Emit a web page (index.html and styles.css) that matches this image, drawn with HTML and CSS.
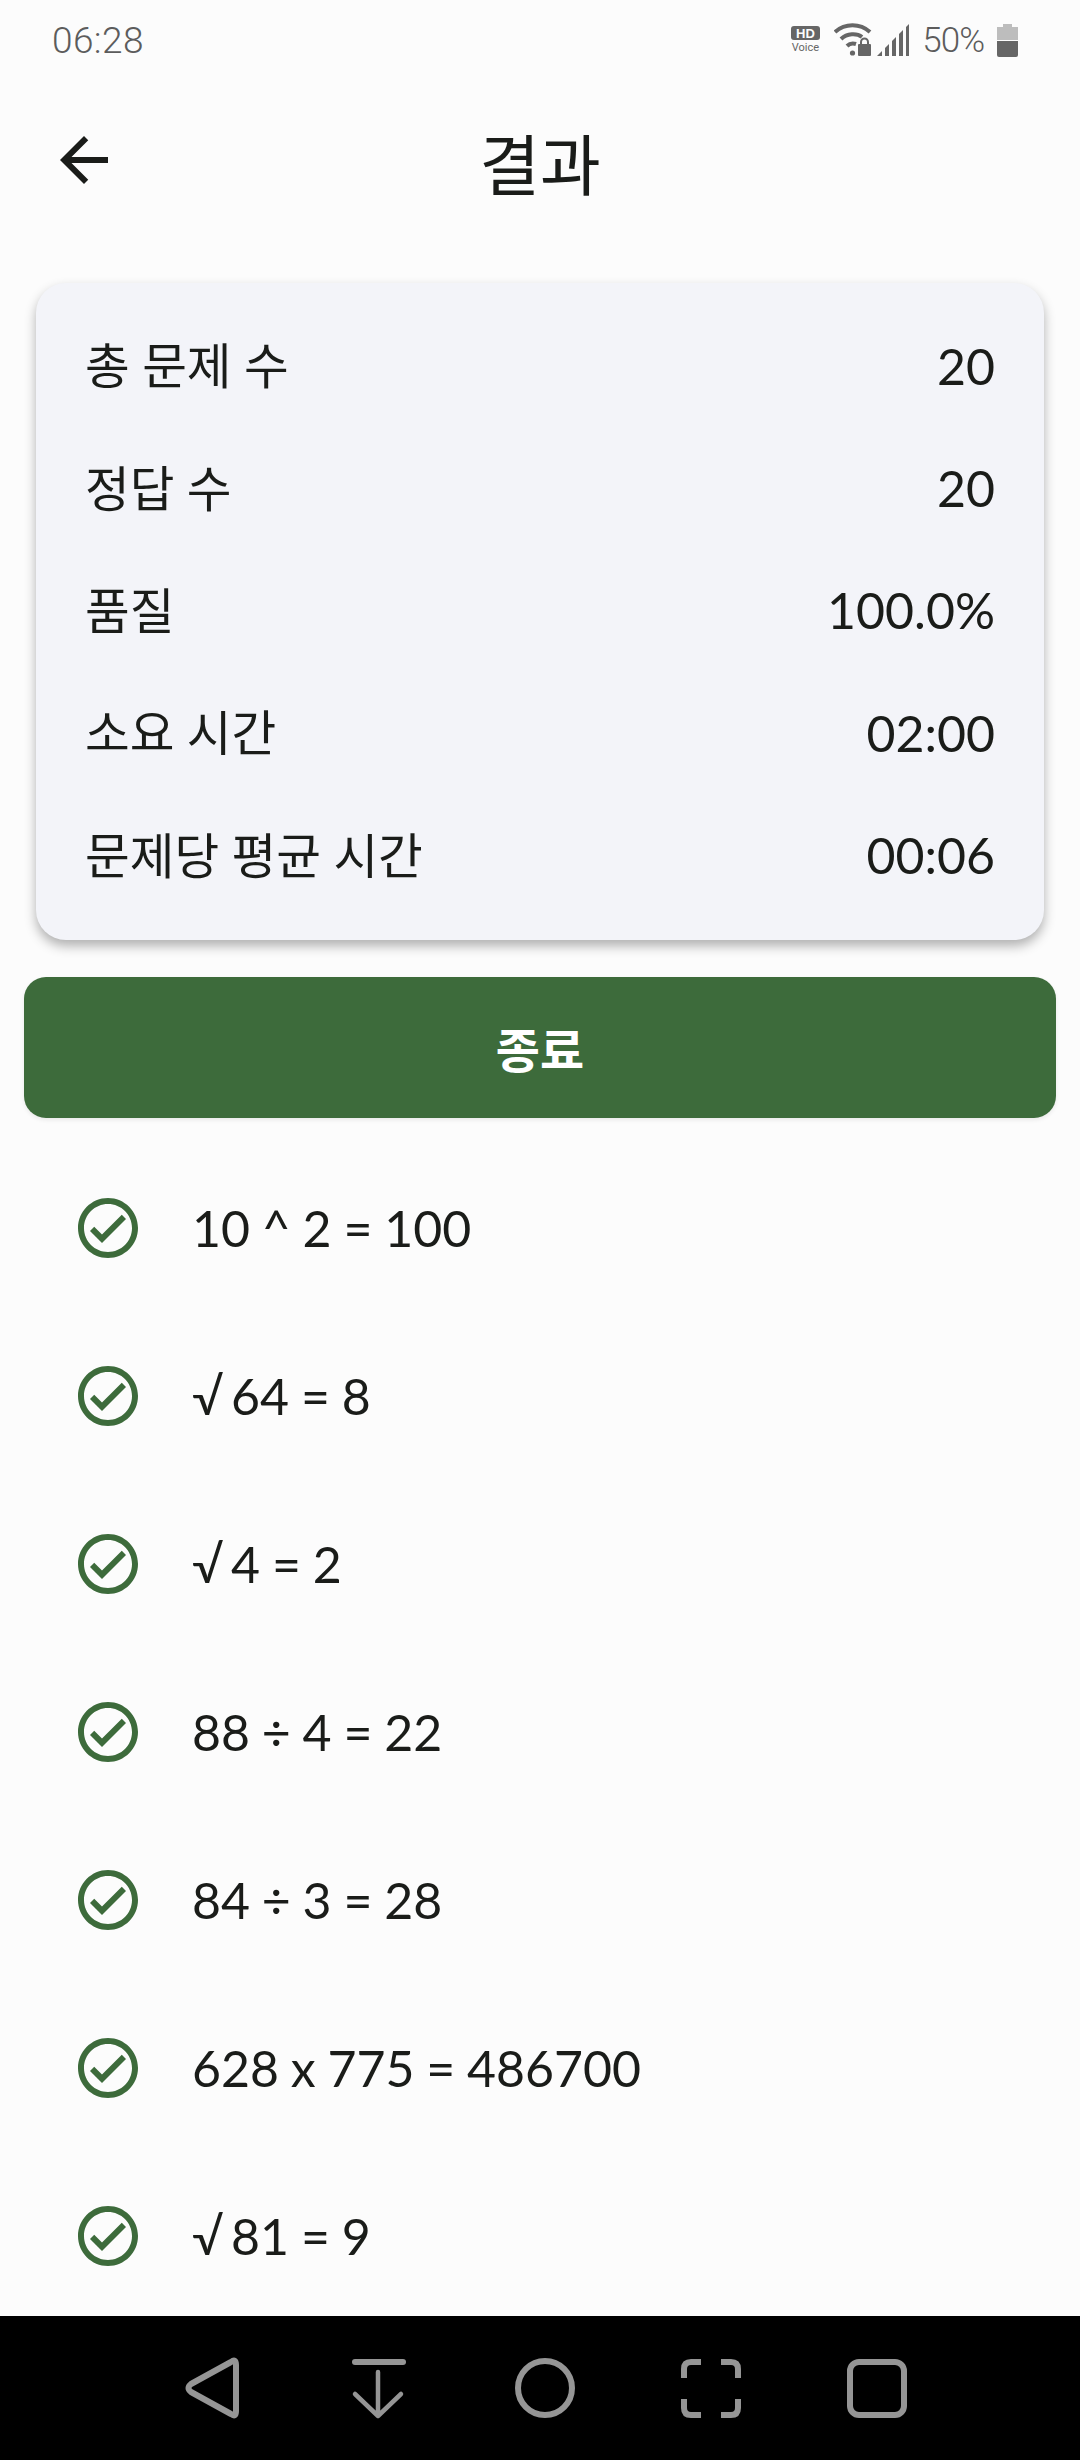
FILE: index.html
```html
<!DOCTYPE html>
<html lang="ko">
<head>
    <meta charset="UTF-8">
    <meta name="viewport" content="width=device-width, initial-scale=1.0">
    <title>결과</title>
    <link rel="stylesheet" href="styles.css">
</head>
<body>

<div class="container">
    <div class="status-bar">
        <span class="clock">06:28</span>
        <div class="status-icons">
            <svg class="icon-hd" width="29" height="28" viewBox="0 0 29 28">
                <rect x="0" y="0" width="29" height="14" rx="3" fill="#666"/>
                <text x="14.5" y="11.5" class="hd-text">HD</text>
                <text x="14.5" y="25" class="voice-text">Voice</text>
            </svg>
            <svg class="icon-wifi" width="38" height="34" viewBox="1 0 38 34">
                <g fill="none" stroke="#666" stroke-width="4">
                    <path d="M2 9 C12 0 27 0 37 9"/>
                    <path d="M8 16 C14 10 24 10 29 14"/>
                    <path d="M14 23 C17 20 20 20 23 21"/>
                </g>
                <circle cx="19.5" cy="30" r="2.6" fill="#666"/>
                <rect x="25" y="21" width="13" height="12" rx="1" fill="#666"/>
                <path d="M28 21 v-2 a3.5 3.5 0 0 1 7 0 v2" fill="none" stroke="#666" stroke-width="2"/>
            </svg>
            <svg class="icon-signal" width="33" height="32" viewBox="0 0 33 32">
                <path d="M0 32 L5 27 V32 Z" fill="#666"/>
                <path d="M8 32 V24 L12 20 V32 Z" fill="#666"/>
                <path d="M15 32 V17 L19 13 V32 Z" fill="#666"/>
                <path d="M22 32 V10 L26 6 V32 Z" fill="#666"/>
                <path d="M29 32 V3 L32 0 V32 Z" fill="#666"/>
            </svg>
            <span class="battery-text">50%</span>
            <svg class="icon-battery" width="21" height="33" viewBox="0 0 21 33">
                <path d="M6 0 H15 V3 H21 V16 H0 V3 H6 Z" fill="#bdbdbd"/>
                <path d="M0 17 H21 V31 a2 2 0 0 1 -2 2 H2 a2 2 0 0 1 -2 -2 Z" fill="#666"/>
            </svg>
        </div>
    </div>

    <div class="app-bar">
        <svg class="back-arrow" width="72" height="72" viewBox="0 0 24 24">
            <path d="M20 11H7.83l5.59-5.59L12 4l-8 8 8 8 1.41-1.41L7.83 13H20v-2z"/>
        </svg>
        <h1>결과</h1>
    </div>

    <div class="summary-card">
        <div class="summary-row"><span>총 문제 수</span><span class="value">20</span></div>
        <div class="summary-row"><span>정답 수</span><span class="value">20</span></div>
        <div class="summary-row"><span>품질</span><span class="value">100.0%</span></div>
        <div class="summary-row"><span>소요 시간</span><span class="value">02:00</span></div>
        <div class="summary-row"><span>문제당 평균 시간</span><span class="value">00:06</span></div>
    </div>

    <button class="finish-button">종료</button>

    <div class="answers">
        <div class="answer-row">
            <svg class="check" width="72" height="72" viewBox="0 0 24 24"><path d="M12 2C6.48 2 2 6.48 2 12s4.48 10 10 10 10-4.48 10-10S17.52 2 12 2zm0 18c-4.41 0-8-3.59-8-8s3.59-8 8-8 8 3.59 8 8-3.59 8-8 8zm4.59-12.42L10 14.17l-2.59-2.58L6 13l4 4 8-8z"/></svg>
            <span>10 ^ 2 = 100</span>
        </div>
        <div class="answer-row">
            <svg class="check" width="72" height="72" viewBox="0 0 24 24"><path d="M12 2C6.48 2 2 6.48 2 12s4.48 10 10 10 10-4.48 10-10S17.52 2 12 2zm0 18c-4.41 0-8-3.59-8-8s3.59-8 8-8 8 3.59 8 8-3.59 8-8 8zm4.59-12.42L10 14.17l-2.59-2.58L6 13l4 4 8-8z"/></svg>
            <span><span class="root">√</span> 64 = 8</span>
        </div>
        <div class="answer-row">
            <svg class="check" width="72" height="72" viewBox="0 0 24 24"><path d="M12 2C6.48 2 2 6.48 2 12s4.48 10 10 10 10-4.48 10-10S17.52 2 12 2zm0 18c-4.41 0-8-3.59-8-8s3.59-8 8-8 8 3.59 8 8-3.59 8-8 8zm4.59-12.42L10 14.17l-2.59-2.58L6 13l4 4 8-8z"/></svg>
            <span><span class="root">√</span> 4 = 2</span>
        </div>
        <div class="answer-row">
            <svg class="check" width="72" height="72" viewBox="0 0 24 24"><path d="M12 2C6.48 2 2 6.48 2 12s4.48 10 10 10 10-4.48 10-10S17.52 2 12 2zm0 18c-4.41 0-8-3.59-8-8s3.59-8 8-8 8 3.59 8 8-3.59 8-8 8zm4.59-12.42L10 14.17l-2.59-2.58L6 13l4 4 8-8z"/></svg>
            <span>88 ÷ 4 = 22</span>
        </div>
        <div class="answer-row">
            <svg class="check" width="72" height="72" viewBox="0 0 24 24"><path d="M12 2C6.48 2 2 6.48 2 12s4.48 10 10 10 10-4.48 10-10S17.52 2 12 2zm0 18c-4.41 0-8-3.59-8-8s3.59-8 8-8 8 3.59 8 8-3.59 8-8 8zm4.59-12.42L10 14.17l-2.59-2.58L6 13l4 4 8-8z"/></svg>
            <span>84 ÷ 3 = 28</span>
        </div>
        <div class="answer-row">
            <svg class="check" width="72" height="72" viewBox="0 0 24 24"><path d="M12 2C6.48 2 2 6.48 2 12s4.48 10 10 10 10-4.48 10-10S17.52 2 12 2zm0 18c-4.41 0-8-3.59-8-8s3.59-8 8-8 8 3.59 8 8-3.59 8-8 8zm4.59-12.42L10 14.17l-2.59-2.58L6 13l4 4 8-8z"/></svg>
            <span>628 x 775 = 486700</span>
        </div>
        <div class="answer-row">
            <svg class="check" width="72" height="72" viewBox="0 0 24 24"><path d="M12 2C6.48 2 2 6.48 2 12s4.48 10 10 10 10-4.48 10-10S17.52 2 12 2zm0 18c-4.41 0-8-3.59-8-8s3.59-8 8-8 8 3.59 8 8-3.59 8-8 8zm4.59-12.42L10 14.17l-2.59-2.58L6 13l4 4 8-8z"/></svg>
            <span><span class="root">√</span> 81 = 9</span>
        </div>
    </div>

    <div class="nav-bar">
        <svg width="60" height="64" viewBox="0 0 60 64">
            <path d="M48 6 Q53 2 53 9 V55 Q53 62 48 58 L8 36 Q3 32 8 28 Z" class="nav-line"/>
        </svg>
        <svg width="60" height="64" viewBox="0 0 60 64">
            <path d="M6 6 H54" class="nav-line nav-thick"/>
            <path d="M29 16 V60 M6 38 L29 60 L52 38" class="nav-line nav-thin"/>
        </svg>
        <svg width="60" height="64" viewBox="0 0 60 64">
            <circle cx="30" cy="32" r="27" class="nav-line"/>
        </svg>
        <svg width="60" height="64" viewBox="0 0 60 64">
            <path d="M20 6 H10 Q3 6 3 13 V22 M40 6 H50 Q57 6 57 13 V22 M3 43 V52 Q3 59 10 59 H20 M57 43 V52 Q57 59 50 59 H40" class="nav-line nav-butt"/>
        </svg>
        <svg width="60" height="64" viewBox="0 0 60 64">
            <rect x="3" y="6" width="54" height="53" rx="9" class="nav-line"/>
        </svg>
    </div>
</div>

</body>
</html>
```

FILE: styles.css
```css
html, body { margin: 0; padding: 0; }
body { font-family: Lato, "Noto Sans CJK KR", sans-serif; background-color: #fcfcfc; color: #1a1c19; }
.container { display: flex; flex-direction: column; width: 1080px; height: 2460px; overflow: hidden; }

.status-bar { display: flex; justify-content: space-between; align-items: center; height: 80px; padding: 0 62px 0 52px; box-sizing: border-box; color: #5c5c5c; font-family: Roboto, sans-serif; }
.clock { font-size: 37px; font-weight: 300; letter-spacing: 0.4px; }
.status-icons { display: flex; align-items: center; }
.hd-text { font: 900 13px "Liberation Sans", sans-serif; fill: #fcfcfc; text-anchor: middle; }
.voice-text { font: 400 11px Roboto, sans-serif; fill: #666; text-anchor: middle; }
.icon-wifi { margin-left: 14px; }
.icon-signal { margin-left: 5px; }
.battery-text { margin-left: 12px; font-size: 35px; font-weight: 300; letter-spacing: -1px; }
.icon-battery { margin-left: 13px; }

.app-bar { position: relative; display: flex; align-items: center; justify-content: center; height: 164px; margin-top: -4px; }
.back-arrow { position: absolute; left: 48px; top: 48px; fill: #1a1c19; }
.app-bar h1 { margin: 6px 0 0; font-size: 66px; font-weight: 400; }

.summary-card { display: flex; flex-direction: column; margin: 43px 36px 0; padding: 19px 49px 26px; background-color: #f3f4f9; border-radius: 30px; box-shadow: 0 6px 12px rgba(0, 0, 0, 0.3); }
.summary-row { display: flex; justify-content: space-between; align-items: center; height: 122.4px; font-size: 48.6px; }
.value { margin-top: 5px; font-size: 50px; font-weight: 400; }

.finish-button { display: block; flex-shrink: 0; width: 1032px; height: 141px; margin: 37px 24px 0; background-color: #3d6b3b; color: #fff; border: none; border-radius: 22px; font-family: inherit; font-size: 48px; font-weight: 700; box-shadow: 0 2px 4px rgba(0, 0, 0, 0.08); }

.answers { flex: 1; min-height: 0; overflow: hidden; margin-top: 26px; }
.answer-row { display: flex; align-items: center; gap: 48px; height: 168px; padding-left: 72px; font-size: 50px; word-spacing: -1px; }
.root { margin-right: -4px; }
.check { flex-shrink: 0; fill: #3d6b3b; }

.nav-bar { display: flex; justify-content: center; align-items: center; gap: 106px; flex-shrink: 0; height: 144px; padding-left: 10px; box-sizing: border-box; background-color: #000; }
.nav-line { fill: none; stroke: #959595; stroke-width: 6; stroke-linecap: round; stroke-linejoin: round; }
.nav-thick { stroke-width: 6; }
.nav-thin { stroke-width: 4.5; }
.nav-butt { stroke-linecap: butt; }
```
